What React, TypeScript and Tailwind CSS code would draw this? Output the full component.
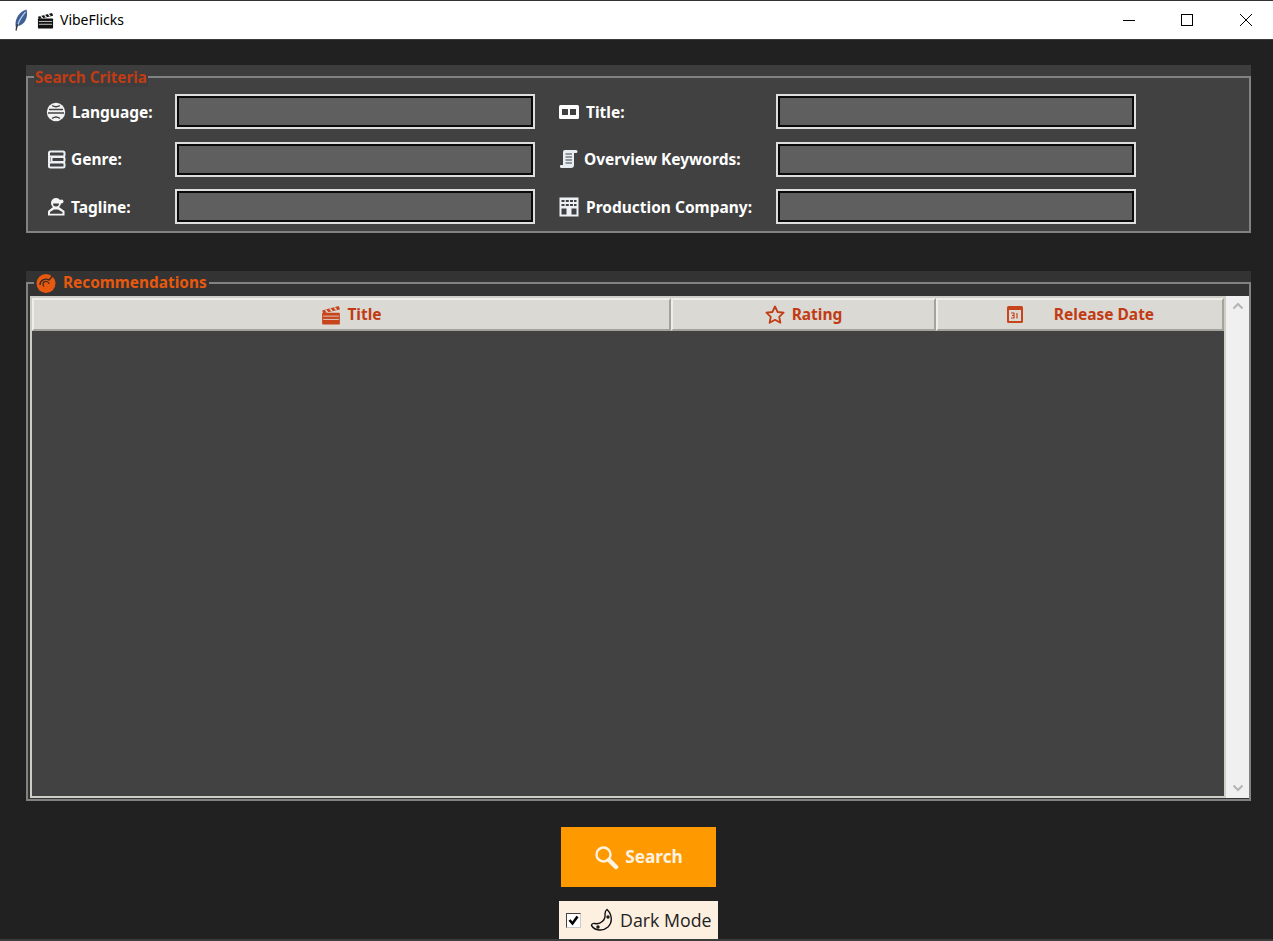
import { ReactNode } from "react";

const uiFont = "font-['Noto_Sans','Open_Sans',sans-serif]";

const Feather = () => (
  <svg width="14" height="22" viewBox="0 0 14 22">
    <path d="M2 19 C0 12 4 3 12.500 0.500 C14.500 8 11 16 4 17 Z" fill="#3d5f96" />
    <path d="M3.500 17 C5 11 8 7 11.500 3" stroke="#b9c9e0" strokeWidth="1.200" fill="none" />
    <path d="M2 21.500 L3.500 15" stroke="#333" strokeWidth="1.300" />
  </svg>
);

const Clapper = ({ color, size, gaps }: { color: string; size: number; gaps: string }) => (
  <svg width={size} height={size} viewBox="0 0 18 18">
    <rect x="1" y="7" width="16" height="10.500" rx="0.800" fill={color} />
    <path d="M1 5 L16 1 L17 4 L2 7.500 Z" fill={color} />
    <path d="M4 4.500 L6 6.500 M8 3.400 L10 5.400 M12 2.300 L14 4.300" stroke={gaps} strokeWidth="1.300" />
    <path d="M2 10 H16 M2 13 H16" stroke={gaps} strokeWidth="0.800" />
  </svg>
);

const WindowButtons = () => (
  <div className="flex h-full">
    <div className="w-[58px] flex items-center justify-center">
      <div className="w-[12px] h-px bg-black" />
    </div>
    <div className="w-[58px] mr-[3px] flex items-center justify-center">
      <div className="w-[12px] h-[12px] border border-black" />
    </div>
    <div className="w-[54px] flex items-center justify-center">
      <svg width="14" height="14" viewBox="0 0 14 14">
        <path d="M1 1 L13 13 M13 1 L1 13" stroke="#000" strokeWidth="1" />
      </svg>
    </div>
  </div>
);

const GlobeIcon = () => (
  <svg width="20" height="20" viewBox="0 0 20 20">
    <circle cx="10" cy="10" r="9.200" fill="#f2f2f2" />
    <path d="M3 7.500 H17 M2 11 H18" stroke="#414141" strokeWidth="1.300" />
    <path d="M6 3.500 Q10 6 14 3.500 M6 16.500 Q10 13.500 14 16.500" stroke="#414141" strokeWidth="1.300" fill="none" />
  </svg>
);

const GenreIcon = () => (
  <svg width="19" height="19" viewBox="0 0 19 19" fill="none" stroke="#eef1f4" strokeWidth="2">
    <rect x="2" y="1.500" width="15.500" height="5" rx="1.500" />
    <rect x="4.500" y="7" width="13" height="5" rx="1.500" />
    <rect x="2" y="12.500" width="15.500" height="5" rx="1.500" />
    <path d="M2 6 V13" />
  </svg>
);

const TaglineIcon = () => (
  <svg width="19" height="19" viewBox="0 0 19 19">
    <circle cx="9" cy="6" r="5" fill="#f4f4f4" />
    <path d="M6 10 L1 14 V18.500 H17.500 V14 L12 10 Z" fill="#f4f4f4" />
    <path d="M3 16.800 V15 L7 12.500 H11 L15.500 15 V16.800 Z" fill="#414141" />
    <path d="M6 6.500 a3 3 0 0 0 6 0 Z" fill="#414141" />
    <circle cx="14.500" cy="4.500" r="2" fill="#f4f4f4" />
  </svg>
);

const TitleIcon = () => (
  <svg width="20" height="14" viewBox="0 0 20 14">
    <rect x="0" y="0" width="20" height="14" rx="1.500" fill="#fff" />
    <rect x="3" y="4" width="6" height="6" fill="#414141" />
    <rect x="11" y="4" width="6" height="6" fill="#414141" />
  </svg>
);

const ScrollIcon = () => (
  <svg width="18" height="20" viewBox="0 0 18 20">
    <path d="M5 1 H16 a1.500 1.500 0 0 1 0 3 H14 V16 a3 3 0 0 1 -3 3 H2 a1.500 1.500 0 0 1 -1 -3 H3 V3 a2 2 0 0 1 2 -2 Z" fill="#e8edf2" />
    <path d="M5.500 5 H12 M5.500 8 H12 M5.500 11 H12 M5.500 14 H12" stroke="#414141" strokeWidth="1" />
  </svg>
);

const BuildingIcon = () => (
  <svg width="20" height="20" viewBox="0 0 20 20">
    <rect x="0.500" y="0.500" width="19" height="19" fill="#eef1f4" />
    <g fill="#414141">
      <rect x="2.500" y="3" width="3" height="2" />
      <rect x="6.800" y="3" width="3" height="2" />
      <rect x="11" y="3" width="3" height="2" />
      <rect x="15" y="3" width="2.500" height="2" />
      <rect x="2.500" y="7" width="3" height="2" />
      <rect x="6.800" y="7" width="3" height="2" />
      <rect x="11" y="7" width="3" height="2" />
      <rect x="15" y="7" width="2.500" height="2" />
      <rect x="2.500" y="11.500" width="5" height="6" />
      <rect x="12.500" y="11.500" width="5" height="6" />
    </g>
  </svg>
);

const RecommendIcon = () => (
  <svg width="20" height="20" viewBox="0 0 20 20">
    <circle cx="10" cy="10.500" r="9.500" fill="#e6590f" />
    <path d="M4 12 a6 6 0 0 1 9 -5 L17 2.500" stroke="#3a2a20" strokeWidth="1.400" fill="none" />
    <path d="M8 13.500 a3 3 0 1 1 5 -2.500" stroke="#3a2a20" strokeWidth="1.200" fill="none" />
  </svg>
);

const StarIcon = () => (
  <svg width="20" height="19" viewBox="0 0 20 19">
    <path d="M10 1.500 L12.600 7 L18.600 7.700 L14.200 11.800 L15.400 17.700 L10 14.800 L4.600 17.700 L5.800 11.800 L1.400 7.700 L7.400 7 Z" fill="none" stroke="#c13c14" strokeWidth="1.800" strokeLinejoin="round" />
  </svg>
);

const CalendarIcon = () => (
  <svg width="18" height="19" viewBox="0 0 18 19">
    <rect x="1" y="1" width="16" height="17" rx="1.500" fill="#c8451b" />
    <rect x="3" y="5" width="12" height="11" fill="#dbd9d3" />
    <path d="M5 8 H8 V13 H5 M8 10.500 H6 M11 8 V13.500" stroke="#c8451b" strokeWidth="1.200" fill="none" />
  </svg>
);

const SearchIcon = () => (
  <svg width="25" height="25" viewBox="0 0 25 25" fill="none" stroke="#fdf3e3">
    <circle cx="9.500" cy="9.500" r="7" strokeWidth="2.400" />
    <path d="M15 15 L22 22" strokeWidth="4.500" strokeLinecap="round" />
  </svg>
);

const MoonIcon = () => (
  <svg width="24" height="24" viewBox="0 0 24 24" fill="#fdf0e0" stroke="#111" strokeWidth="1.400">
    <path d="M17 1.500 C22 6 23 14 18 19 C13 23.500 5 23 1.500 17.500 C1.500 16 3 15 5 15.500 C10 17 16 12 15 6 C15 4 15.500 2.500 17 1.500 Z" />
    <circle cx="18" cy="9" r="1" />
    <circle cx="8" cy="19" r="1" />
  </svg>
);

const Entry = () => (
  <div className="w-[360px] h-[35px] border-2 border-[#dedede]">
    <div className="w-full h-full bg-[#5f5f5f] border-2 border-[#0a0a0a]" />
  </div>
);

const Field = ({ icon, label, gap }: { icon: ReactNode; label: string; gap: string }) => (
  <div className={`flex items-center ${gap} text-white font-bold text-[15.5px] whitespace-nowrap`}>
    <div className="flex items-center justify-center w-[20px] h-[22px] shrink-0">{icon}</div>
    <span className="mt-[2px]">{label}</span>
  </div>
);

const HeaderCell = ({ width, icon, label, gap }: { width: string; icon: ReactNode; label: string; gap: string }) => (
  <div className={`${width} h-full flex items-center justify-center ${gap} border-2 border-t-[#efeee9] border-l-[#efeee9] border-b-[#a3a29c] border-r-[#a3a29c] text-[#c13c14] font-bold text-[15.5px]`}>
    {icon}
    <span>{label}</span>
  </div>
);

export default function App() {
  return (
    <div className={`w-[1273px] h-[941px] bg-[#212121] border-b-2 border-b-[#3c3c3c] flex flex-col overflow-hidden ${uiFont}`}>
      <div className="h-[40px] shrink-0 bg-white border-t border-t-[#333] border-b border-b-[#3a3a3a] flex items-center justify-between">
        <div className="flex items-center pl-[14px]">
          <Feather />
          <div className="ml-[9px]"><Clapper color="#111" size={17} gaps="#fff" /></div>
          <span className="ml-[6px] mb-[2px] text-[14px] text-black">VibeFlicks</span>
        </div>
        <WindowButtons />
      </div>

      <div className="flex-1 flex flex-col pl-[26px] pt-[25px] pr-[22px]">
        <section className="relative h-[168px] bg-[#3d3d3d] pt-[11px] shrink-0">
          <div className="h-[157px] bg-[#414141] border-2 border-[#828282] pl-[18px] pt-[16px] flex flex-col gap-[12.5px]">
            <div className="flex items-center">
              <div className="w-[129px]"><Field icon={<GlobeIcon />} label="Language:" gap="gap-[6px]" /></div>
              <Entry />
              <div className="w-[241px] pl-[24px]"><Field icon={<TitleIcon />} label="Title:" gap="gap-[7px]" /></div>
              <Entry />
            </div>
            <div className="flex items-center">
              <div className="w-[129px]"><Field icon={<GenreIcon />} label="Genre:" gap="gap-[5px]" /></div>
              <Entry />
              <div className="w-[241px] pl-[24px]"><Field icon={<ScrollIcon />} label="Overview Keywords:" gap="gap-[5px]" /></div>
              <Entry />
            </div>
            <div className="flex items-center">
              <div className="w-[129px]"><Field icon={<TaglineIcon />} label="Tagline:" gap="gap-[5px]" /></div>
              <Entry />
              <div className="w-[241px] pl-[24px]"><Field icon={<BuildingIcon />} label="Production Company:" gap="gap-[7px]" /></div>
              <Entry />
            </div>
          </div>
          <div className="absolute left-[8px] top-[2px] px-px bg-[#3d3d3d] h-[20px] leading-[20px] text-[#c13c14] font-bold text-[15.2px]">Search Criteria</div>
        </section>

        <section className="relative mt-[38px] h-[530px] bg-[#333333] pt-[11px] shrink-0">
          <div className="h-[519px] border-2 border-[#828282] bg-[#333333] pl-[2px] pt-[12px] pb-px flex">
            <div className="flex-1 flex flex-col border-2 border-[#cfcec6]">
              <div className="h-[33px] flex shrink-0 bg-[#dbd9d3]">
                <HeaderCell width="w-[639px]" icon={<Clapper color="#c8451b" size={20} gaps="#dbd9d3" />} label="Title" gap="gap-[6px]" />
                <HeaderCell width="w-[265px]" icon={<StarIcon />} label="Rating" gap="gap-[7px]" />
                <HeaderCell width="w-[288px]" icon={<CalendarIcon />} label="Release Date" gap="gap-[30px]" />
              </div>
              <div className="flex-1 bg-[#424242]" />
            </div>
            <div className="w-[23px] bg-[#f0f0f0] flex flex-col items-center justify-between py-[6px] shrink-0">
              <svg width="12" height="8" viewBox="0 0 12 8"><path d="M1.500 6.500 L6 2 L10.500 6.500" fill="none" stroke="#b5b5b5" strokeWidth="2" /></svg>
              <svg width="12" height="8" viewBox="0 0 12 8"><path d="M1.500 1.500 L6 6 L10.500 1.500" fill="none" stroke="#b5b5b5" strokeWidth="2" /></svg>
            </div>
          </div>
          <div className="absolute left-[8px] top-0 h-[24px] flex items-center gap-[7px] px-[2px] bg-[#333333] text-[#e6590f] font-bold text-[15.4px]">
            <RecommendIcon />
            <span>Recommendations</span>
          </div>
        </section>

        <div className="flex flex-col items-center mt-[26px]">
          <div className="w-[155px] h-[60px] bg-[#ff9900] flex items-center justify-center gap-[6px] text-[#fdf3e3] font-bold text-[17.3px]">
            <SearchIcon />
            <span>Search</span>
          </div>
          <div className="mt-[14px] w-[159px] h-[38px] bg-[#fdf0e0] flex items-center pl-[7px] text-[#222] text-[17.8px] font-['Open_Sans',sans-serif]">
            <div className="w-[15px] h-[15px] bg-white border border-t-[#444] border-l-[#444] border-b-[#ccc] border-r-[#ccc] flex items-center justify-center">
              <svg width="11" height="11" viewBox="0 0 11 11"><path d="M1.500 5 L4.500 8.500 L9.500 1.500" fill="none" stroke="#000" strokeWidth="2.600" /></svg>
            </div>
            <div className="ml-[9px]"><MoonIcon /></div>
            <span className="ml-[6px]">Dark Mode</span>
          </div>
        </div>
      </div>
    </div>
  );
}
